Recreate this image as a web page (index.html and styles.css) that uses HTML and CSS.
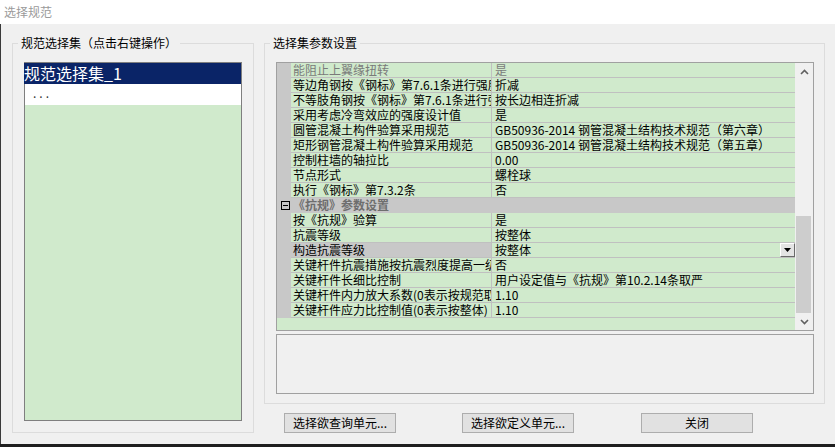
FILE: index.html
```html
<!DOCTYPE html>
<html lang="zh-CN">
<head>
    <meta charset="UTF-8">
    <title>选择规范</title>
    <link rel="stylesheet" href="styles.css">
</head>
<body>
<div class="window">
    <div class="titlebar">选择规范</div>
    <div class="client">
        <fieldset class="group group-sets">
            <legend>规范选择集（点击右键操作）</legend>
            <div class="setlist">
                <div class="set-item selected">规范选择集_1</div>
                <div class="set-item more">...</div>
            </div>
        </fieldset>

        <div class="right-col">
            <fieldset class="group group-params">
                <legend>选择集参数设置</legend>
                <div class="propgrid">
                    <div class="prop-rows">
                        <div class="row disabled"><div class="gut"></div><div class="name">能阻止上翼缘扭转</div><div class="val">是</div></div>
                        <div class="row"><div class="gut"></div><div class="name">等边角钢按《钢标》第7.6.1条进行强度折减</div><div class="val">折减</div></div>
                        <div class="row"><div class="gut"></div><div class="name">不等肢角钢按《钢标》第7.6.1条进行强度折减</div><div class="val">按长边相连折减</div></div>
                        <div class="row"><div class="gut"></div><div class="name">采用考虑冷弯效应的强度设计值</div><div class="val">是</div></div>
                        <div class="row"><div class="gut"></div><div class="name">圆管混凝土构件验算采用规范</div><div class="val">GB50936-2014 钢管混凝土结构技术规范（第六章）</div></div>
                        <div class="row"><div class="gut"></div><div class="name">矩形钢管混凝土构件验算采用规范</div><div class="val">GB50936-2014 钢管混凝土结构技术规范（第五章）</div></div>
                        <div class="row"><div class="gut"></div><div class="name">控制柱墙的轴拉比</div><div class="val">0.00</div></div>
                        <div class="row"><div class="gut"></div><div class="name">节点形式</div><div class="val">螺栓球</div></div>
                        <div class="row"><div class="gut"></div><div class="name">执行《钢标》第7.3.2条</div><div class="val">否</div></div>
                        <div class="row cat">
                            <div class="gut">
                                <svg width="9" height="9" viewBox="0 0 9 9"><rect x="0.5" y="0.5" width="8" height="8" fill="none" stroke="#000"/><line x1="2" y1="4.5" x2="7" y2="4.5" stroke="#000"/></svg>
                            </div>
                            <div class="catname">《抗规》参数设置</div>
                        </div>
                        <div class="row"><div class="gut"></div><div class="name">按《抗规》验算</div><div class="val">是</div></div>
                        <div class="row"><div class="gut"></div><div class="name">抗震等级</div><div class="val">按整体</div></div>
                        <div class="row current">
                            <div class="gut"></div>
                            <div class="name">构造抗震等级</div>
                            <div class="val">
                                <span class="val-text">按整体</span>
                                <span class="drop-btn"><svg width="7" height="4" viewBox="0 0 7 4"><polygon points="0,0 7,0 3.5,4" fill="#000"/></svg></span>
                            </div>
                        </div>
                        <div class="row"><div class="gut"></div><div class="name">关键杆件抗震措施按抗震烈度提高一级</div><div class="val">否</div></div>
                        <div class="row"><div class="gut"></div><div class="name">关键杆件长细比控制</div><div class="val">用户设定值与《抗规》第10.2.14条取严</div></div>
                        <div class="row"><div class="gut"></div><div class="name">关键杆件内力放大系数(0表示按规范取值)</div><div class="val">1.10</div></div>
                        <div class="row"><div class="gut"></div><div class="name">关键杆件应力比控制值(0表示按整体)</div><div class="val">1.10</div></div>
                        <div class="prop-fill"></div>
                    </div>
                    <div class="vscroll">
                        <div class="sb-btn"><svg width="9" height="6" viewBox="0 0 9 6"><polyline points="1,5 4.5,1.5 8,5" fill="none" stroke="#606060" stroke-width="1.6"/></svg></div>
                        <div class="sb-track"><div class="sb-thumb"></div></div>
                        <div class="sb-btn"><svg width="9" height="6" viewBox="0 0 9 6"><polyline points="1,1 4.5,4.5 8,1" fill="none" stroke="#606060" stroke-width="1.6"/></svg></div>
                    </div>
                </div>
                <div class="desc"></div>
            </fieldset>
            <div class="buttons">
                <button class="btn">选择欲查询单元...</button>
                <button class="btn">选择欲定义单元...</button>
                <button class="btn btn-close">关闭</button>
            </div>
        </div>
    </div>
    <div class="bottom-edge"></div>
</div>
</body>
</html>
```

FILE: styles.css
```css
* {
    box-sizing: border-box;
}
body {
    margin: 0;
    font-family: "Noto Sans CJK SC", sans-serif;
    font-size: 12px;
    background-color: #f0f0f0;
}
.window {
    width: 835px;
    height: 447px;
    display: flex;
    flex-direction: column;
    background-color: #f0f0f0;
    overflow: hidden;
}
.titlebar {
    height: 24px;
    line-height: 24px;
    padding-left: 4px;
    background-color: #fff;
    color: #9a9a9a;
}
.client {
    flex: 1;
    display: flex;
    align-items: flex-start;
    border-left: 1px solid #3a3a3a;
    padding: 12px 0 0 11px;
}
.bottom-edge {
    height: 3px;
    background-color: #1e1e1e;
}
.group {
    margin: 0;
    min-width: 0;
    border: 1px solid #dcdcdc;
}
.group legend {
    padding: 0 3px;
    margin-left: -6px;
    line-height: 14px;
    color: #000;
}
.group-sets {
    width: 242px;
    height: 397px;
    padding: 12px 11px 11px 11px;
}
.setlist {
    height: 359px;
    border: 1px solid #7f7f7f;
    background-color: #d0eacc;
}
.set-item {
    height: 21px;
    background-color: #fff;
    white-space: nowrap;
}
.set-item.selected {
    background-color: #0a2467;
    color: #fff;
    font-size: 16px;
    line-height: 20px;
    margin-left: -1px;
}
.set-item.more {
    padding-left: 8px;
    line-height: 18px;
    letter-spacing: 3px;
    color: #333;
}
.right-col {
    width: 561px;
    margin-left: 10px;
    display: flex;
    flex-direction: column;
}
.group-params {
    height: 368px;
    padding: 12px 10px 0 11px;
}
.propgrid {
    height: 269px;
    border: 1px solid #a0a0a0;
    display: flex;
}
.prop-rows {
    flex: 1;
    display: flex;
    flex-direction: column;
    background-color: #d0eacc;
}
.row {
    height: 15px;
    display: flex;
    line-height: 14px;
}
.gut {
    width: 14px;
    flex: none;
    background-color: #c8c8c8;
}
.name {
    width: 201px;
    flex: none;
    padding-left: 2px;
    border-right: 1px solid #c0c0c0;
    border-bottom: 1px solid #c0c0c0;
    white-space: nowrap;
    overflow: hidden;
}
.val {
    flex: 1;
    display: flex;
    padding-left: 3px;
    border-bottom: 1px solid #c0c0c0;
    white-space: nowrap;
    overflow: hidden;
}
.val-text {
    flex: 1;
}
.row.disabled .name,
.row.disabled .val {
    color: #7a7a7a;
}
.row.current .name {
    background-color: #c8c8c8;
}
.drop-btn {
    width: 15px;
    height: 14px;
    display: flex;
    align-items: center;
    justify-content: center;
    background-color: #e4e4e4;
    border: 1px solid;
    border-color: #fff #6a6a6a #6a6a6a #fff;
}
.row.cat .gut {
    display: flex;
    align-items: center;
    justify-content: center;
    padding-left: 2px;
}
.catname {
    flex: 1;
    padding-left: 2px;
    background-color: #c8c8c8;
    color: #6e6e6e;
    font-weight: bold;
}
.prop-fill {
    flex: 1;
}
.vscroll {
    width: 18px;
    display: flex;
    flex-direction: column;
    background-color: #f0f0f0;
}
.sb-btn {
    height: 17px;
    display: flex;
    align-items: center;
    justify-content: center;
}
.sb-track {
    flex: 1;
    display: flex;
    flex-direction: column;
    justify-content: flex-end;
    padding: 0 2px 0 1px;
}
.sb-thumb {
    height: 97px;
    background-color: #cdcdcd;
}
.desc {
    margin-top: 3px;
    height: 60px;
    border: 1px solid #a0a0a0;
    background-color: #f0f0f0;
}
.buttons {
    margin-top: 9px;
    padding-left: 20px;
    display: flex;
    gap: 66px;
}
.btn {
    width: 112px;
    height: 20px;
    padding: 0;
    border: 1px solid #adadad;
    background-color: #e1e1e1;
    font-family: "Noto Sans CJK SC", sans-serif;
    font-size: 12px;
    line-height: 16px;
    color: #000;
}
.btn-close {
    margin-left: 1px;
}
```
